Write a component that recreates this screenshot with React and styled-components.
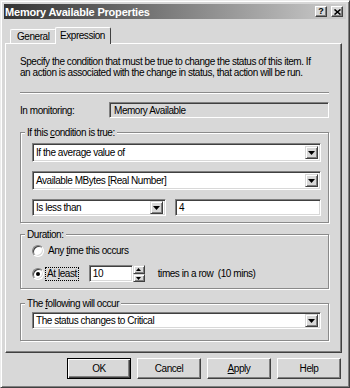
import React from 'react';
import styled, { createGlobalStyle } from 'styled-components';

const face = '#d8d8d8';

const GlobalStyle = createGlobalStyle`
  html, body {
    margin: 0;
    padding: 0;
    background: #ffffff;
  }
  body {
    font-family: "Liberation Sans", Arial, sans-serif;
    font-size: 10px;
    letter-spacing: -0.45px;
    color: #000;
  }
`;

const Window = styled.div`
  width: 350px;
  height: 388px;
  box-sizing: border-box;
  background: ${face};
  border: 1px solid;
  border-color: #ececec #404040 #404040 #ececec;
  box-shadow: inset 1px 1px 0 #fff, inset -1px -1px 0 #808080;
  padding: 3px;
  display: flex;
  flex-direction: column;
`;

const TitleBar = styled.div`
  height: 15px;
  display: flex;
  align-items: center;
  padding: 0 3px 0 1px;
  background: linear-gradient(to right, #333333, #686868 35%, #cdcdcd);
`;

const Title = styled.div`
  flex: 1;
  color: #fff;
  font-weight: bold;
  font-size: 11px;
  letter-spacing: -0.2px;
  white-space: nowrap;
`;

const CaptionButton = styled.div`
  width: 12px;
  height: 11px;
  box-sizing: border-box;
  margin-left: ${p => p.$gap || 0}px;
  background: ${face};
  border: 1px solid;
  border-color: #fff #404040 #404040 #fff;
  box-shadow: inset -1px -1px 0 #808080;
  display: flex;
  align-items: center;
  justify-content: center;
  font-weight: bold;
  font-size: 9px;
  line-height: 9px;
  letter-spacing: 0;
`;

const TabRow = styled.div`
  height: 16px;
  margin: 8px 0 0 6px;
  display: flex;
  align-items: flex-end;
`;

const Tab = styled.div`
  position: relative;
  z-index: ${p => (p.$active ? 2 : 1)};
  box-sizing: border-box;
  width: ${p => p.$width}px;
  height: ${p => (p.$active ? 17 : 14)}px;
  margin-bottom: ${p => (p.$active ? -1 : 0)}px;
  margin-left: ${p => (p.$active ? -1 : 0)}px;
  background: ${face};
  border: 1px solid;
  border-color: #fff #404040 transparent #fff;
  border-bottom: none;
  border-radius: 2px 2px 0 0;
  padding: ${p => (p.$active ? '2px 0 0 4px' : '1px 0 0 6px')};
  line-height: 11px;
  white-space: nowrap;
`;

const Panel = styled.div`
  margin: 0 4px 0 1px;
  border: 1px solid;
  border-color: #fff #404040 #404040 #fff;
  box-shadow: inset -1px -1px 0 #808080;
  padding: 12px 12px 11px 14px;
`;

const Description = styled.p`
  margin: 0;
  line-height: 11px;
  white-space: nowrap;
`;

const Separator = styled.div`
  margin-top: 14px;
  border-top: 1px solid #8a8a8a;
  border-bottom: 1px solid #fff;
`;

const MonitorRow = styled.div`
  margin-top: 8px;
  display: flex;
  align-items: center;
`;

const Label = styled.div`
  width: ${p => p.$width}px;
  flex-shrink: 0;
`;

const Sunken = styled.div`
  box-sizing: border-box;
  height: 17px;
  display: flex;
  align-items: center;
  background: ${p => (p.$disabled ? face : '#fff')};
  border: 1px solid;
  border-color: #808080 #fff #fff #808080;
  box-shadow: inset 1px 1px 0 #404040, inset -1px -1px 0 ${face};
  padding: 2px 2px 2px 3px;
  white-space: nowrap;
`;

const TextField = styled(Sunken)`
  flex: ${p => (p.$width ? 'none' : 1)};
  width: ${p => (p.$width ? `${p.$width}px` : 'auto')};
  height: ${p => p.$height || 17}px;
  padding-left: ${p => p.$indent || 3}px;
  margin-left: ${p => p.$left || 0}px;
`;

const Group = styled.fieldset`
  margin: ${p => p.$top}px 0 0;
  padding: ${p => p.$pad};
  min-inline-size: 0;
  border: 1px solid #8a8a8a;
  box-shadow: inset 1px 1px 0 #fff, 1px 1px 0 #fff;
`;

const Legend = styled.legend`
  padding: 0 2px;
  margin-left: -7px;
  line-height: 11px;
  background: ${face};
`;

const Stack = styled.div`
  display: flex;
  flex-direction: column;
  gap: 9px;
`;

const Row = styled.div`
  display: flex;
  align-items: center;
  gap: ${p => p.$gap || 0}px;
`;

const ComboBox = styled(Sunken)`
  flex: ${p => (p.$width ? 'none' : 1)};
  width: ${p => (p.$width ? `${p.$width}px` : 'auto')};
  padding: 2px;
`;

const ComboText = styled.span`
  flex: 1;
  padding-left: 1px;
  line-height: 13px;
`;

const RaisedButton = styled.div`
  box-sizing: border-box;
  width: ${p => p.$w}px;
  height: ${p => p.$h}px;
  background: ${face};
  border: 1px solid;
  border-color: ${face} #404040 #404040 ${face};
  box-shadow: inset 1px 1px 0 #fff, inset -1px -1px 0 #808080;
  display: flex;
  align-items: center;
  justify-content: center;
`;

const RadioRow = styled.div`
  display: flex;
  align-items: center;
  height: ${p => p.$height}px;
  margin-top: ${p => p.$top || 0}px;
`;

const Radio = styled.span`
  box-sizing: border-box;
  width: 12px;
  height: 12px;
  border-radius: 50%;
  background: #fff;
  border: 1px solid;
  border-color: #808080 #fff #fff #808080;
  box-shadow: inset 1px 1px 0 #404040, inset -1px -1px 0 ${face};
  display: flex;
  align-items: center;
  justify-content: center;
  flex-shrink: 0;
  &::after {
    content: '';
    width: 4px;
    height: 4px;
    border-radius: 50%;
    background: ${p => (p.$checked ? '#000' : 'transparent')};
  }
`;

const RadioLabel = styled.span`
  margin-left: ${p => (p.$focus ? 1 : 2)}px;
  padding: 0 1px;
  line-height: 12px;
  border: 1px dotted ${p => (p.$focus ? '#000' : 'transparent')};
`;

const Spinner = styled.div`
  display: flex;
  flex-direction: column;
`;

const Suffix = styled.span`
  margin-left: 13px;
  white-space: pre;
`;

const Footer = styled.div`
  margin: 5px 5px 0 0;
  display: flex;
  justify-content: flex-end;
  gap: 6px;
`;

const Button = styled.div`
  box-sizing: border-box;
  width: 64px;
  height: 21px;
  background: ${face};
  border: 1px solid;
  border-color: ${p => (p.$default ? '#000' : '#fff #404040 #404040 #fff')};
  box-shadow: ${p =>
    p.$default
      ? `inset 1px 1px 0 #fff, inset -1px -1px 0 #404040, inset -2px -2px 0 #808080`
      : `inset -1px -1px 0 #808080`};
  display: flex;
  align-items: center;
  justify-content: center;
`;

const Arrow = ({ up }) => (
  <svg width="7" height="4" viewBox="0 0 7 4">
    <path d={up ? 'M3.5 0 L7 4 L0 4 Z' : 'M0 0 H7 L3.5 4 Z'} fill="#000" />
  </svg>
);

const SmallArrow = ({ up }) => (
  <svg width="5" height="3" viewBox="0 0 5 3">
    <path d={up ? 'M2.5 0 L5 3 L0 3 Z' : 'M0 0 H5 L2.5 3 Z'} fill="#000" />
  </svg>
);

const Combo = ({ children, width }) => (
  <ComboBox $width={width}>
    <ComboText>{children}</ComboText>
    <RaisedButton $w={13} $h={13}>
      <Arrow />
    </RaisedButton>
  </ComboBox>
);

export default function App() {
  return (
    <>
      <GlobalStyle />
      <Window>
        <TitleBar>
          <Title>Memory Available Properties</Title>
          <CaptionButton>?</CaptionButton>
          <CaptionButton $gap={4}>
            <svg width="7" height="6" viewBox="0 0 7 6">
              <path d="M0.5 0.5 L6.5 5.5 M6.5 0.5 L0.5 5.5" stroke="#000" strokeWidth="1.6" />
            </svg>
          </CaptionButton>
        </TitleBar>

        <TabRow>
          <Tab $width={46}>General</Tab>
          <Tab $width={56} $active>Expression</Tab>
        </TabRow>

        <Panel>
          <Description>
            Specify the condition that must be true to change the status of this item. If
            <br />
            an action is associated with the change in status, that action will be run.
          </Description>
          <Separator />

          <MonitorRow>
            <Label $width={89}>In monitoring:</Label>
            <TextField $disabled $height={16} $indent={4}>Memory Available</TextField>
          </MonitorRow>

          <Group $top={9} $pad="5px 7px 6px 11px">
            <Legend>
              If this <u>c</u>ondition is true:
            </Legend>
            <Stack>
              <Combo>If the average value of</Combo>
              <Combo>Available MBytes [Real Number]</Combo>
              <Row $gap={9}>
                <Combo width={134}>Is less than</Combo>
                <TextField>4</TextField>
              </Row>
            </Stack>
          </Group>

          <Group $top={6} $pad="4px 7px 6px 11px">
            <Legend>Duration:</Legend>
            <RadioRow $height={14}>
              <Radio />
              <RadioLabel>
                Any <u>t</u>ime this occurs
              </RadioLabel>
            </RadioRow>
            <RadioRow $height={17} $top={7}>
              <Radio $checked />
              <RadioLabel $focus>
                At <u>l</u>east
              </RadioLabel>
              <TextField $width={44} $left={10}>10</TextField>
              <Spinner>
                <RaisedButton $w={12} $h={9}>
                  <SmallArrow up />
                </RaisedButton>
                <RaisedButton $w={12} $h={8}>
                  <SmallArrow />
                </RaisedButton>
              </Spinner>
              <Suffix>times in a row  (10 mins)</Suffix>
            </RadioRow>
          </Group>

          <Group $top={9} $pad="3px 7px 11px 11px">
            <Legend>
              The <u>f</u>ollowing will occur
            </Legend>
            <Combo>The status changes to Critical</Combo>
          </Group>
        </Panel>

        <Footer>
          <Button $default>OK</Button>
          <Button>Cancel</Button>
          <Button>
            <span>
              <u>A</u>pply
            </span>
          </Button>
          <Button>Help</Button>
        </Footer>
      </Window>
    </>
  );
}
